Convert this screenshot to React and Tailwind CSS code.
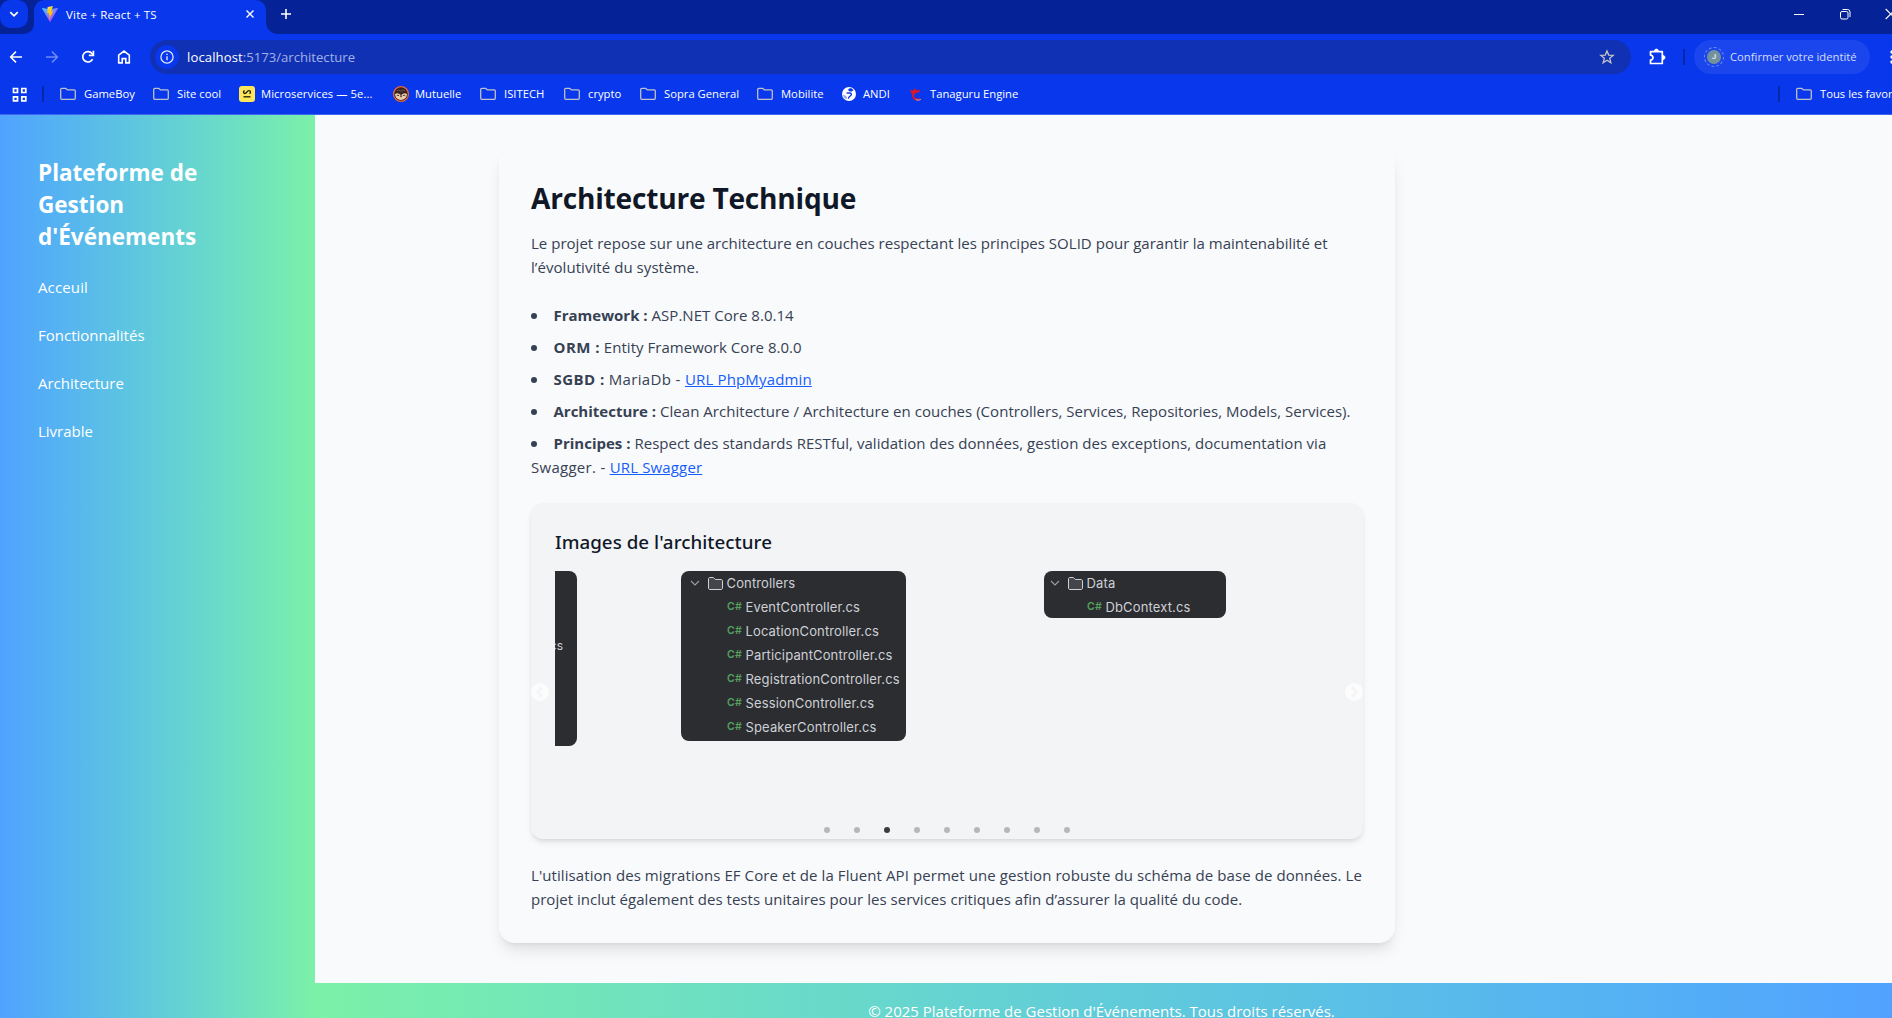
import React from "react";

const FolderIcon = () => (
  <svg width="16" height="16" viewBox="0 0 16 16" className="shrink-0" fill="none" stroke="#bfc1c8" strokeWidth="1.3">
    <path d="M.7 3.4c0-.6.4-1 1-1h4.1l1.700 1.500h6.800c.6 0 1 .4 1 1v7.400c0 .6-.4 1-1 1H1.700c-.6 0-1-.4-1-1z" />
  </svg>
);

const MicroservicesIcon = () => (
  <svg width="16" height="16" viewBox="0 0 16 16" className="shrink-0" fill="none" stroke="#1d1a05">
    <rect width="16" height="16" rx="3" fill="#ffe65a" stroke="none" />
    <path d="M5.600 4.600c-.8.2-1.100.8-1.100 1.500 0 .8.500 1.400 1.400 1.400 1.900 0 1.900-2.800 3.900-2.800 1 0 1.700.6 1.700 1.500 0 .7-.4 1.200-1.100 1.400" strokeWidth="1.300" />
    <path d="M4.500 10.800h7" strokeWidth="1.300" />
  </svg>
);

const MutuelleIcon = () => (
  <svg width="16" height="16" viewBox="0 0 16 16" className="shrink-0">
    <circle cx="8" cy="8" r="7.400" fill="#3a2420" stroke="#e8683c" strokeWidth="1.200" />
    <path d="M2 8.300c1.800-1.700 4-.9 6 1 2-1.900 4.200-2.700 6-1-.4 3.600-3 5.700-6 5.700s-5.600-2.100-6-5.700z" fill="#ecd0ac" />
    <path d="M3.700 9.700q1.200-1.100 2.400 0M9.900 9.700q1.200-1.100 2.400 0" stroke="#3a2420" strokeWidth=".9" fill="none" />
    <path d="M6.800 9.400h2.400L8 11.800z" fill="#3a2420" />
    <path d="M4 4.700q2-1.600 4 .6 2-2.200 4-.6" stroke="#7a5546" strokeWidth=".9" fill="none" />
  </svg>
);

const GlobeIcon = () => (
  <svg width="16" height="16" viewBox="0 0 16 16" className="shrink-0">
    <circle cx="8" cy="8" r="7" fill="#fff" />
    <path d="M7.200 3.200c.9-1 2.600-1.200 3.900-.5.600.5 1 1 1.400 1.600-.9.500-1.400 1.300-2.600 1.300-1.600 0-2.800-.9-2.700-2.400z" fill="#0937ec" />
    <path d="M5.600 7h3.200c1 0 1.600.7 1.600 1.600 0 1.200-.9 1.400-1.700 1.700-.8.400-.7 1.400-1.500 2.300" stroke="#0937ec" strokeWidth="1.300" fill="none" />
    <path d="M2 8.800c1.500.2 2.900 1 3.600 2 .5.700.3 1.600-.1 2.400C3.500 12.400 2.200 10.800 2 8.800z" fill="#0937ec" opacity=".45" />
  </svg>
);

const TanaguruIcon = () => (
  <svg width="16" height="16" viewBox="0 0 16 16" className="shrink-0" fill="none">
    <path d="M12.500 12.800c-2.500 1.700-6.600 1-7.300-2.300-.5-2.800 1.300-4.900 4.300-5" stroke="#e01722" strokeWidth="2" />
    <path d="M12.800 13.400c-1.600.9-3.600 1-5-.1" stroke="#9fb0dd" strokeWidth="1" />
    <path d="M1.800 4.200l3.300.4 2-2.600.9 2.400 4.500-.3-2 2.600-3.200-.5L4 8z" fill="#e01722" />
  </svg>
);

const bookmarks = [
  { label: "GameBoy", Icon: FolderIcon, cls: "w-[93px] gap-2" },
  { label: "Site cool", Icon: FolderIcon, cls: "w-[86px] gap-2" },
  { label: "Microservices — 5e...", Icon: MicroservicesIcon, cls: "w-[154px] gap-1.5 tracking-[0.06px]" },
  { label: "Mutuelle", Icon: MutuelleIcon, cls: "w-[87px] gap-1.5" },
  { label: "ISITECH", Icon: FolderIcon, cls: "w-[84px] gap-2" },
  { label: "crypto", Icon: FolderIcon, cls: "w-[76px] gap-2" },
  { label: "Sopra General", Icon: FolderIcon, cls: "w-[117px] gap-2" },
  { label: "Mobilite", Icon: FolderIcon, cls: "w-[84px] gap-2" },
  { label: "ANDI", Icon: GlobeIcon, cls: "w-[67px] gap-1.5" },
  { label: "Tanaguru Engine", Icon: TanaguruIcon, cls: "gap-1.5" },
];

function TabStrip() {
  return (
    <div className="flex h-[34px]">
      <div className="w-[34px] shrink-0 rounded-br-[10px] bg-[#052296]">
        <div className="flex size-7 items-center justify-center rounded-[10px] bg-[#0937ec]">
          <svg width="10" height="10" viewBox="0 0 10 10" fill="none" stroke="#fff" strokeWidth="1.700">
            <path d="M1.300 3.200 5 6.900l3.700-3.700" />
          </svg>
        </div>
      </div>
      <div className="w-[232px] shrink-0 bg-[#052296]">
        <div className="flex h-full items-center rounded-t-[10px] bg-[#0937ec] pb-[6px] pr-[11px] pl-2">
          <svg width="16" height="16" viewBox="0 0 16 16" className="shrink-0">
            <defs>
              <linearGradient id="viteBody" x1="0" y1="0" x2=".7" y2="1">
                <stop offset="0" stopColor="#41d1ff" />
                <stop offset="1" stopColor="#bd34fe" />
              </linearGradient>
              <linearGradient id="viteBolt" x1=".4" y1="0" x2=".6" y2="1">
                <stop offset="0" stopColor="#ffea83" />
                <stop offset=".2" stopColor="#ffd21c" />
                <stop offset="1" stopColor="#ffa800" />
              </linearGradient>
            </defs>
            <path d="M15.900 2.600 8.400 15.800a.4.400 0 0 1-.7 0L.1 2.600a.4.400 0 0 1 .4-.6l7.500 1.300L15.500 2a.4.400 0 0 1 .4.600z" fill="url(#viteBody)" />
            <path d="M11.300 0 5.800 1.100a.2.200 0 0 0-.2.200L5.300 7c0 .1.100.2.200.2l1.600-.3-.5 2.400c0 .1.100.3.200.2l1-.3-.8 3.700c0 .2.300.3.400.1l3.700-7.500c.1-.1 0-.3-.2-.2l-1.600.3 1.500-5.400z" fill="url(#viteBolt)" />
          </svg>
          <span className="ml-2 grow pt-px text-[11.5px] tracking-[0.19px] text-white">Vite + React + TS</span>
          <svg width="10" height="10" viewBox="0 0 10 10" stroke="#fff" strokeWidth="1.400">
            <path d="M1.500 1.500l7 7M8.500 1.500l-7 7" />
          </svg>
        </div>
      </div>
      <div className="flex grow items-center overflow-hidden rounded-bl-[12px] bg-[#052296] pb-[6px] pl-[14px]">
        <svg width="12" height="12" viewBox="0 0 12 12" stroke="#fff" strokeWidth="1.600" className="shrink-0">
          <path d="M6 1v10M1 6h10" />
        </svg>
        <div className="ml-auto flex shrink-0 items-center">
          <svg width="12" height="12" viewBox="0 0 12 12" stroke="#fff">
            <path d="M1 6.500h10" />
          </svg>
          <svg width="12" height="12" viewBox="0 0 12 12" fill="none" stroke="#fff" className="ml-[34px]">
            <rect x="1.500" y="3.500" width="7.500" height="7.500" rx="1.500" />
            <path d="M3.500 1.500h5a2.500 2.500 0 0 1 2.500 2.500v5" />
          </svg>
          <svg width="7" height="12" viewBox="0 0 7 12" stroke="#fff" strokeWidth="1.100" className="ml-[34px]">
            <path d="M.7 1l10 10M10.700 1l-10 10" />
          </svg>
        </div>
      </div>
    </div>
  );
}

function Toolbar() {
  return (
    <div className="flex h-[46px] items-center overflow-hidden pl-[8px]">
      <svg width="16" height="16" viewBox="0 0 16 16" fill="none" stroke="#fff" strokeWidth="1.500" className="shrink-0">
        <path d="M14 8H2.800M8 2.600 2.600 8 8 13.400" />
      </svg>
      <svg width="16" height="16" viewBox="0 0 16 16" fill="none" stroke="#6c8af4" strokeWidth="1.500" className="ml-5 shrink-0">
        <path d="M2 8h11.200M8 2.600 13.400 8 8 13.400" />
      </svg>
      <svg width="16" height="16" viewBox="0 0 16 16" fill="none" stroke="#fff" strokeWidth="1.700" className="ml-5 shrink-0">
        <path d="M12.600 10.200A5.200 5.200 0 1 1 12 4.500l1.300 1.700" />
        <path d="M13.400 1.800v4.600H8.800" />
      </svg>
      <svg width="16" height="16" viewBox="0 0 16 16" fill="none" stroke="#fff" strokeWidth="1.600" className="ml-5 shrink-0">
        <path d="M2.700 6.200 8 2.100l5.300 4.100v7.700H9.800V9.600H6.200v4.300H2.700z" />
      </svg>
      <div className="ml-[18px] flex h-[34px] w-[1481px] shrink-0 items-center rounded-full bg-[#1031b4] pl-[5px] pr-[16px]">
        <div className="flex size-6 items-center justify-center rounded-full bg-[#0937ec]">
          <svg width="14" height="14" viewBox="0 0 14 14" fill="none" stroke="#dfe6fb" strokeWidth="1.300">
            <circle cx="7" cy="7" r="6.100" />
            <path d="M7 6.200v4M7 3.700v1.400" strokeWidth="1.400" />
          </svg>
        </div>
        <p className="ml-2 pt-px text-[13.125px] text-[#a3b3e6]">
          <span className="tracking-[0.1px] text-white">localhost</span>:5173/architecture
        </p>
        <svg width="16" height="16" viewBox="0 0 16 16" fill="none" stroke="#c9c6c4" strokeWidth="1.300" className="ml-auto">
          <path d="M8 1.900l1.700 4.200 4.500.3-3.500 2.900 1.200 4.500L8 11.300l-3.900 2.500 1.200-4.500L1.800 6.400l4.500-.3z" />
        </svg>
      </div>
      <svg width="18" height="18" viewBox="0 0 18 18" fill="none" stroke="#fff" strokeWidth="1.700" strokeLinejoin="round" className="ml-[17px] shrink-0">
        <path d="M2.500 3.700h11.800v11.800H2.500v-3.400a2.500 2.500 0 0 0 0-5z" />
        <path d="M6.400 3.100a2 2 0 0 1 4 0zM15 7.500a2 2 0 0 1 0 4z" fill="#fff" strokeWidth=".8" />
      </svg>
      <div className="ml-[17px] h-4 w-[2px] shrink-0 bg-[#0528a8]" />
      <div className="ml-[9px] flex h-[34px] w-[176px] shrink-0 items-center rounded-full bg-[#1b46ed] pl-[10px]">
        <div className="flex size-5 items-center justify-center rounded-full border border-dashed border-[#7f97ee]">
          <div className="flex size-[14px] items-center justify-center rounded-full bg-[#73919c] text-[8px] leading-none font-semibold text-[#e5ecef]" style={{ fontFamily: "Roboto, sans-serif" }}>J</div>
        </div>
        <span className="ml-1.5 whitespace-nowrap text-[11.25px] text-[#d3ddff]">Confirmer votre identité</span>
      </div>
      <svg width="4" height="16" viewBox="0 0 4 16" fill="#fff" className="ml-[19px] shrink-0">
        <circle cx="3" cy="3" r="1.700" />
        <circle cx="3" cy="8" r="1.700" />
        <circle cx="3" cy="13" r="1.700" />
      </svg>
    </div>
  );
}

function BookmarksBar() {
  return (
    <div className="flex h-[34px] items-center overflow-hidden pb-[6px] text-[11.25px] whitespace-nowrap text-white">
      <svg width="15" height="15" viewBox="0 0 15 15" fill="none" stroke="#fff" strokeWidth="1.700" className="ml-[12px] shrink-0">
        <path d="M1.500 1.500h4v4h-4zM9.800 1.500h4v4h-4zM1.500 9.800h4v4h-4zM9.800 9.800h4v4h-4z" />
      </svg>
      <div className="mr-[16px] ml-[15px] h-4 w-[2px] shrink-0 bg-[#0528a8]" />
      {bookmarks.map(({ label, Icon, cls }) => (
        <div key={label} className={"flex shrink-0 items-center " + cls}>
          <Icon />
          <span>{label}</span>
        </div>
      ))}
      <div className="ml-auto flex w-[114px] shrink-0 items-center gap-2">
        <div className="mr-2 h-4 w-[2px] shrink-0 bg-[#0528a8]" />
        <FolderIcon />
        <span>Tous les favoris</span>
      </div>
    </div>
  );
}

const navItems = ["Acceuil", "Fonctionnalités", "Architecture", "Livrable"];

function Sidebar() {
  return (
    <aside className="w-[315px] shrink-0 bg-linear-to-r from-[#51a2ff] to-[#7bf1a8] pt-[42px] pl-[38px] text-white">
      <h2 className="w-[200px] text-[22.5px] leading-8 font-bold">Plateforme de Gestion d'Événements</h2>
      <nav className="mt-[22px] flex flex-col gap-6 text-[15px] leading-6">
        {navItems.map((n) => (
          <a key={n} className="first:tracking-[0.14px]">{n}</a>
        ))}
      </nav>
    </aside>
  );
}

function Item({ name, tight = true, children }) {
  return (
    <li>
      <span className="mr-[16.5px] inline-block size-[6px] rounded-full bg-[#364153] align-[2px]" />
      <strong className={tight ? "tracking-[0px]" : "tracking-[0.45px]"}>{name} :</strong> {children}
    </li>
  );
}

const Link = ({ children }) => <a className="tracking-[0.15px] text-[#155dfc] underline">{children}</a>;

function FileTree({ folder, files, className }) {
  return (
    <div className={"shrink-0 rounded-lg bg-[#2b2d30] text-[13px] leading-6 tracking-[0.14px] text-[#ced0d6] " + className}>
      <div className="flex h-6 items-center">
        <svg width="10" height="10" viewBox="0 0 10 10" fill="none" stroke="#9da0a8" strokeWidth="1.100" className="mr-[8px]">
          <path d="M1 3l4 4 4-4" />
        </svg>
        <svg width="15" height="13" viewBox="0 0 15 13" fill="#43454a" stroke="#ced0d6">
          <path d="M.500 2c0-.8.500-1.500 1.500-1.500h3.300l2 2H13c.900 0 1.500.6 1.500 1.500v7c0 .9-.6 1.500-1.500 1.500H2c-1 0-1.500-.6-1.500-1.500z" />
        </svg>
        <span className="ml-[3.500px]">{folder}</span>
      </div>
      {files.map((f) => (
        <div key={f} className="flex h-6 items-center pl-[37px]">
          <span className="w-[18.5px] pb-px text-[10.5px] font-semibold text-[#57a05e]">C#</span>
          <span>{f}</span>
        </div>
      ))}
    </div>
  );
}

function Arrow({ className, d }) {
  return (
    <svg width="18" height="18" viewBox="0 0 18 18" className={"absolute top-[180px] " + className}>
      <circle cx="9" cy="9" r="9" fill="#fcfcfd" />
      <path d={d} fill="none" stroke="#f3f4f6" strokeWidth="2.600" />
    </svg>
  );
}

function Gallery() {
  return (
    <section className="relative mt-6 h-[336px] rounded-xl bg-[#f3f4f6] px-6 pt-6 shadow-md">
      <h3 className="pt-px text-[18.75px] leading-7 font-medium tracking-[0.03px] text-[#101828]" style={{ fontFamily: '"Noto Sans", sans-serif' }}>
        Images de l'architecture
      </h3>
      <div className="mt-[15px] flex h-[250px] items-start overflow-hidden" style={{ fontFamily: 'Inter, "Open Sans", sans-serif' }}>
        <div className="flex h-[175px] w-[22px] shrink-0 justify-end overflow-hidden rounded-r-lg bg-[#2b2d30] pt-[63px] pr-[14px] text-[12px] leading-6 text-[#ced0d6]">
          .cs
        </div>
        <FileTree
          className="ml-[104px] h-[170px] w-[225px] pl-[9px]"
          folder="Controllers"
          files={["EventController.cs", "LocationController.cs", "ParticipantController.cs", "RegistrationController.cs", "SessionController.cs", "SpeakerController.cs"]}
        />
        <FileTree className="ml-[138px] h-[47px] w-[182px] pl-[6px]" folder="Data" files={["DbContext.cs"]} />
      </div>
      <div className="mt-[6px] flex justify-center gap-6">
        {Array.from({ length: 9 }, (_, i) => (
          <span key={i} className={"size-[6px] rounded-full " + (i === 2 ? "bg-[#3a3b3c]" : "bg-[#b6b7b8]")} />
        ))}
      </div>
      <Arrow className="left-0" d="M11 4.500 6.500 9l4.500 4.500" />
      <Arrow className="right-0" d="M7 4.500 11.500 9 7 13.500" />
    </section>
  );
}

export default function App() {
  return (
    <div className="flex h-[1018px] w-[1892px] flex-col overflow-hidden bg-[#f9fafc]" style={{ fontFamily: '"Open Sans", "Noto Sans", sans-serif' }}>
      <header className="h-[115px] shrink-0 border-b border-[#3f66f1] bg-[#0937ec]">
        <TabStrip />
        <Toolbar />
        <BookmarksBar />
      </header>
      <div className="flex grow">
        <Sidebar />
        <div className="flex grow flex-col">
          <main className="h-[868px] pt-8 pl-[184px]">
            <article className="h-[796px] w-[896px] rounded-2xl p-8 text-[15px] leading-6 text-[#364153] shadow-lg">
              <h1 className="pt-px text-[28.125px] leading-9 font-bold tracking-[-0.22px] text-[#101828]">Architecture Technique</h1>
              <p className="mt-[15px] tracking-[0.02px]">
                Le projet repose sur une architecture en couches respectant les principes SOLID pour garantir la maintenabilité et
                <br />
                <span className="tracking-[0.06px]">l’évolutivité du système.</span>
              </p>
              <ul className="mt-6 space-y-2 whitespace-nowrap tracking-[0.03px]">
                <Item name="Framework">ASP.NET Core 8.0.14</Item>
                <Item name="ORM" tight={false}>Entity Framework Core 8.0.0</Item>
                <Item name="SGBD" tight={false}>
                  <span className="tracking-[0.36px]">MariaDb - </span>
                  <Link>URL PhpMyadmin</Link>
                </Item>
                <Item name="Architecture">Clean Architecture / Architecture en couches (Controllers, Services, Repositories, Models, Services).</Item>
                <Item name="Principes">
                  <span className="tracking-[0.04px]">Respect des standards RESTful, validation des données, gestion des exceptions, documentation via</span>
                  <br />
                  <span className="tracking-[0.28px]">Swagger. - </span>
                  <Link>URL Swagger</Link>
                </Item>
              </ul>
              <Gallery />
              <p className="mt-6 whitespace-nowrap">
                <span className="tracking-[0.08px]">L'utilisation des migrations EF Core et de la Fluent API permet une gestion robuste du schéma de base de données. Le</span>
                <br />
                <span className="tracking-[0.03px]">projet inclut également des tests unitaires pour les services critiques afin d’assurer la qualité du code.</span>
              </p>
            </article>
          </main>
          <footer className="grow bg-linear-to-r from-[#7bf1a8] to-[#51a2ff] pt-4 pr-1 text-center text-[15px] leading-6 text-white">
            © 2025 Plateforme de Gestion d'Événements. Tous droits réservés.
          </footer>
        </div>
      </div>
    </div>
  );
}
